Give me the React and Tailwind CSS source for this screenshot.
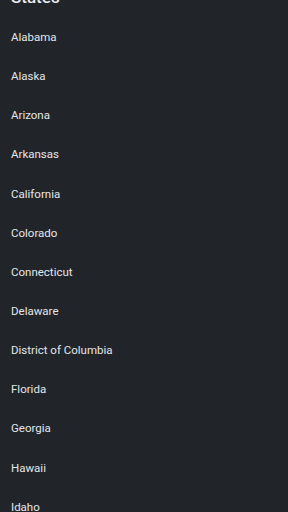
import React from "react";

const states = [
  "Alabama",
  "Alaska",
  "Arizona",
  "Arkansas",
  "California",
  "Colorado",
  "Connecticut",
  "Delaware",
  "District of Columbia",
  "Florida",
  "Georgia",
  "Hawaii",
  "Idaho",
  "Illinois",
];

export default function App() {
  return (
    <div
      className="w-[288px] h-[512px] overflow-hidden bg-[#212529] text-[#e3e6e9]"
      style={{ fontFamily: "Roboto, 'Noto Sans', sans-serif" }}
    >
      <div className="mt-[-17px] px-[11px]">
        <h2 className="text-[17px] leading-[28px] font-medium text-[#e9ecef]">States</h2>
      </div>
      <ul className="mt-[6.3px]">
        {states.map((s) => (
          <li
            key={s}
            className="h-[39.17px] flex items-center px-[11px] text-[11.5px] leading-[16px]"
          >
            {s}
          </li>
        ))}
      </ul>
    </div>
  );
}
